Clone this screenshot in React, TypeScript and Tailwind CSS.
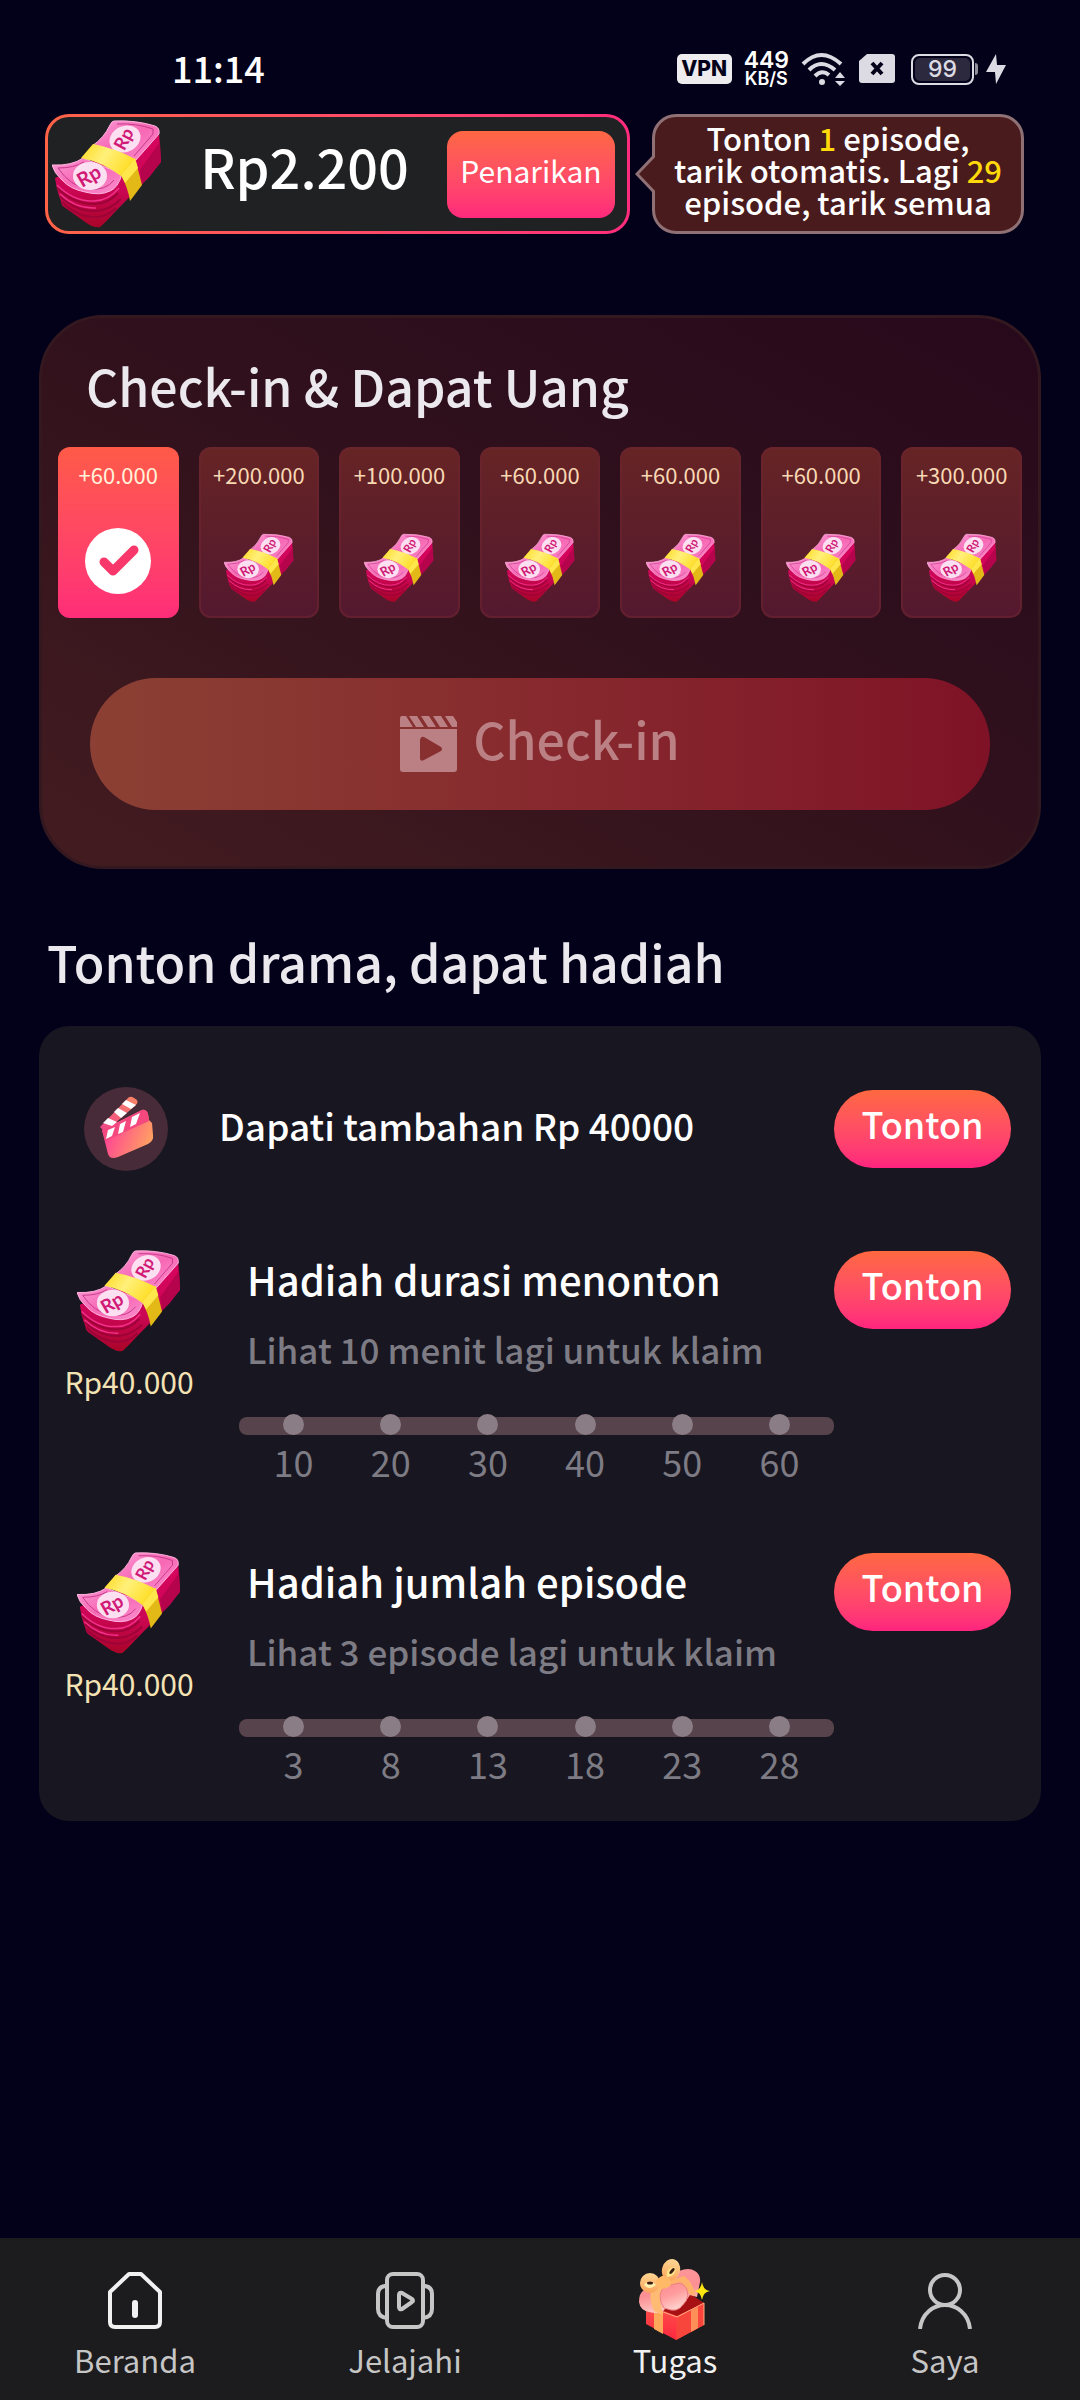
import { useState } from 'react'
import type { ReactNode } from 'react'
import clsx from 'clsx'

const days = [
    { amount: '+60.000', done: true },
    { amount: '+200.000', done: false },
    { amount: '+100.000', done: false },
    { amount: '+60.000', done: false },
    { amount: '+60.000', done: false },
    { amount: '+60.000', done: false },
    { amount: '+300.000', done: false },
]

const rewards = [
    {
        title: 'Hadiah durasi menonton',
        hint: 'Lihat 10 menit lagi untuk klaim',
        amount: 'Rp40.000',
        steps: [10, 20, 30, 40, 50, 60],
    },
    {
        title: 'Hadiah jumlah episode',
        hint: 'Lihat 3 episode lagi untuk klaim',
        amount: 'Rp40.000',
        steps: [3, 8, 13, 18, 23, 28],
    },
]

function MoneyStack({ className }: { className: string }) {
    return (
        <svg viewBox="0 0 110 108" className={className} aria-hidden="true">
            <defs>
                <linearGradient id="money-side" x1="0" y1="0" x2="0" y2="1">
                    <stop offset="0" stopColor="#d8045f" />
                    <stop offset="0.6" stopColor="#cb0655" />
                    <stop offset="1" stopColor="#a90428" />
                </linearGradient>
                <linearGradient id="money-note" x1="0" y1="0" x2="1" y2="1">
                    <stop offset="0" stopColor="#fb9bd6" />
                    <stop offset="0.5" stopColor="#f768b4" />
                    <stop offset="1" stopColor="#fa8fce" />
                </linearGradient>
                <linearGradient id="money-band" x1="0" y1="0" x2="1" y2="0.4">
                    <stop offset="0" stopColor="#ffd91f" />
                    <stop offset="0.5" stopColor="#fff07a" />
                    <stop offset="1" stopColor="#ffdf2b" />
                </linearGradient>
            </defs>
            <path d="M3 58 L107 12 L109 42 Q104 48 98 56 L62 93 Q52 104 48 107 Q43 108 36 104 L12 87 Q9 85 9 81 L7 76 Q4 66 3 58Z" fill="url(#money-side)" />
            <path d="M88 50 L108 22 L109 42 Q104 48 98 56 L90 64Z" fill="#b5034c" />
            <path d="M5 68 Q22 84 42 84 Q56 84 66 73 M8 76 Q24 92 44 91 Q58 90 69 79 M10 82 Q26 98 46 97 Q56 96 64 88" fill="none" stroke="#9c0438" strokeWidth="2" />
            <path d="M5 65 Q22 82 42 81 Q56 81 67 68 M8 74 Q24 89 44 88" fill="none" stroke="#f0308a" strokeWidth="1.5" />
            <path d="M62 1 Q84 0 103 6 Q108 8 107 14 L84 40 L40 26 Q52 18 58 5 Q60 1 62 1Z" fill="url(#money-note)" stroke="#ffb5e0" strokeWidth="1" />
            <path d="M65 4 Q84 3 101 9 L101 14 L82 36" fill="none" stroke="#c63888" strokeWidth="1" />
            <path d="M0 45 Q20 46 31 38 L70 54 Q66 68 58 71 Q48 76 33 72 Q18 69 10 60 Q2 53 0 45Z" fill="url(#money-note)" stroke="#ffb5e0" strokeWidth="1" />
            <path d="M6 48 Q22 48 32 42 M6 48 Q18 66 36 69 Q54 71 62 60" fill="none" stroke="#c63888" strokeWidth="1" />
            <ellipse cx="38" cy="56" rx="17" ry="14" fill="#fce0f2" />
            <ellipse cx="73" cy="19" rx="16" ry="13" fill="#fce0f2" transform="rotate(-25 73 19)" />
            <path d="M41 24 Q63 28 83 39 L69 56 Q50 42 29 38Z" fill="url(#money-band)" />
            <path d="M83 38 L90 65 L78 81 Q76 68 69 55Z" fill="#e3b917" />
            <path d="M69 55 L83 38 L86 48 L73 63Z" fill="#ffe64a" />
            <text x="0" y="7" fontSize="20" fontWeight="700" textAnchor="middle" fill="#d01a76" fontFamily="Lato, sans-serif" transform="translate(37 56) rotate(-30)">Rp</text>
            <text x="0" y="6" fontSize="18" fontWeight="700" textAnchor="middle" fill="#d01a76" fontFamily="Lato, sans-serif" transform="translate(72 19) rotate(-62)">Rp</text>
        </svg>
    )
}

function CheckBadge() {
    return (
        <svg viewBox="0 0 66 66" className="size-[66px]" aria-hidden="true">
            <circle cx="33" cy="33" r="33" fill="#fff" />
            <path d="M19 34 L28 43 L49 22" fill="none" stroke="#f8386b" strokeWidth="9" strokeLinecap="round" strokeLinejoin="round" />
        </svg>
    )
}

function ClapperIcon() {
    return (
        <svg viewBox="0 0 57 56" className="h-14 w-[57px]" fill="currentColor" aria-hidden="true">
            <path d="M1 0 L6 0 L13 11 L0 11 L0 2Z M9 0 L17 0 L24 11 L16 11Z M21 0 L29 0 L36 11 L28 11Z M33 0 L41 0 L48 11 L40 11Z M45 0 L53 0 L57 6 L57 11 L52 11Z" />
            <path fillRule="evenodd" d="M0 13 L57 13 L57 53 Q57 56 54 56 L3 56 Q0 56 0 53Z M20 24 L20 43 Q21 46 24 44 L41 35 Q43 33 41 31 L24 21 Q21 20 20 24Z" />
        </svg>
    )
}

function ClapperBadge() {
    return (
        <svg viewBox="0 0 84 84" className="size-[84px]" aria-hidden="true">
            <defs>
                <linearGradient id="clap" x1="0" y1="0.3" x2="1" y2="0.7">
                    <stop offset="0.1" stopColor="#ff3f97" />
                    <stop offset="1" stopColor="#ffa65f" />
                </linearGradient>
                <linearGradient id="clap-stick" x1="0" y1="1" x2="1" y2="0">
                    <stop offset="0" stopColor="#f0458a" />
                    <stop offset="1" stopColor="#f98765" />
                </linearGradient>
            </defs>
            <circle cx="42" cy="42" r="42" fill="#472b38" />
            <path d="M18 43 L58 23 Q62 22 64 27 L65 33 L68 36 L69 48 Q70 54 64 57 L34 70 Q26 73 24 67Z" fill="url(#clap)" />
            <path d="M18 43 L58 23 Q62 22 64 27 L65 34 L21 54Z" fill="#f4487f" />
            <path d="M16 40 L43 12 Q46 8 50 11 Q56 14 52 18 L29 38 L19 43Z" fill="url(#clap-stick)" />
            <path d="M38 17 L42 13 L52 18 L47 22Z M30 25 L34 21 L43 26 L37 31Z M19 36 L24 31 L33 35 L28 39Z" fill="#fff" />
            <path d="M24 43 L31 40 L28 49 L22 52Z M36 37 L42 34 L39 45 L34 47Z M48 30 L56 26 L52 37 L46 40Z" fill="#fff" />
        </svg>
    )
}

function HomeIcon() {
    return (
        <svg viewBox="0 0 56 58" className="h-[58px] w-14" fill="none" stroke="#f1f1f1" strokeWidth="4" strokeLinejoin="round" strokeLinecap="round" aria-hidden="true">
            <path d="M22 3 L34 3 L53 21 L53 51 Q53 56 48 56 L8 56 Q3 56 3 51 L3 21Z" />
            <path d="M28 32 L28 44" strokeWidth="6" />
        </svg>
    )
}

function ExploreIcon() {
    return (
        <svg viewBox="0 0 60 58" className="h-[58px] w-[60px]" fill="none" stroke="#c6c6c6" strokeWidth="4" strokeLinejoin="round" aria-hidden="true">
            <rect x="12" y="3" width="36" height="53" rx="6" />
            <path d="M12 15 L10 15 Q3 16 3 23 L3 38 Q3 46 12 47 M48 15 L50 15 Q57 16 57 23 L57 38 Q57 46 48 47" />
            <path d="M24 24 Q24 21 27 22 L37 28 Q39 30 37 31 L27 38 Q24 39 24 36Z" />
        </svg>
    )
}

function GiftIcon() {
    return (
        <svg viewBox="0 0 72 82" className="h-[82px] w-[72px]" aria-hidden="true">
            <defs>
                <linearGradient id="gift-lid" x1="0" y1="0" x2="0.3" y2="1">
                    <stop offset="0" stopColor="#ff9a9c" />
                    <stop offset="0.6" stopColor="#fb8f94" />
                    <stop offset="1" stopColor="#ffc9c4" />
                </linearGradient>
                <linearGradient id="gift-front" x1="0" y1="0" x2="0.4" y2="1">
                    <stop offset="0" stopColor="#fb8a90" />
                    <stop offset="0.5" stopColor="#ff9c9d" />
                    <stop offset="1" stopColor="#ffd0cb" />
                </linearGradient>
                <linearGradient id="gift-bow" x1="0" y1="0" x2="0" y2="1">
                    <stop offset="0" stopColor="#ffd793" />
                    <stop offset="1" stopColor="#fba35a" />
                </linearGradient>
                <linearGradient id="gift-box" x1="0" y1="0" x2="0" y2="1">
                    <stop offset="0" stopColor="#fb5a4c" />
                    <stop offset="1" stopColor="#ff2840" />
                </linearGradient>
            </defs>
            <path d="M7 50 L40 38 L65 44 L65 66 L37 81 L7 65Z" fill="url(#gift-box)" />
            <path d="M38 57 L65 44 L65 66 L37 81Z" fill="#f9463c" />
            <path d="M22 51 L50 34 L65 44 L38 57Z" fill="#a81113" />
            <path d="M24 53 L38 58 L65 44 L65 66" fill="none" stroke="#ffab80" strokeWidth="1" />
            <path d="M52 51 L59 48 L59 69 L52 73Z" fill="#ff8f58" />
            <path d="M15 48 L24 52 L24 75 L15 70Z" fill="#ffa85c" />
            <path d="M0 43 Q0 34 5 31 L40 12 Q50 8 56 12 Q62 16 61 23 L58 38 Q54 37 51 36 L44 46 L26 50 Q22 56 10 53 Q1 51 0 43Z" fill="url(#gift-lid)" />
            <path d="M30 22 L45 17 Q55 24 56 37 L50 35 Q49 27 39 25 L28 28Z" fill="#ffb26c" />
            <path d="M13 29 L30 24 Q22 32 21 41 L24 56 L15 52 Q9 38 13 29Z" fill="#ffbb74" />
            <path d="M21 37 Q22 29 28 27 L40 24 Q45 24 48 31 Q50 37 47 42 L41 49 Q37 52 32 51 L25 49 Q21 44 21 37Z" fill="url(#gift-front)" stroke="#ee7f80" strokeWidth="1" />
            <ellipse cx="11" cy="24" rx="10" ry="10" fill="url(#gift-bow)" />
            <path d="M5 26 Q10 19 17 26 Q10 32 5 26Z" fill="#fff0ad" />
            <ellipse cx="11" cy="24" rx="3" ry="1.5" fill="#3b1c13" />
            <ellipse cx="32" cy="11" rx="9" ry="11" fill="url(#gift-bow)" transform="rotate(15 32 11)" />
            <path d="M28 18 Q26 9 36 8 Q38 17 28 18Z" fill="#ffe58c" />
            <ellipse cx="33" cy="12" rx="3.5" ry="1.5" fill="#3b1c13" transform="rotate(-50 33 12)" />
            <path d="M17 22 Q23 14 29 18 Q34 23 31 27 Q25 32 19 28Z" fill="#ffb967" />
            <path d="M63 23 Q64 31 71 32 Q64 33 63 41 Q62 33 55 32 Q62 31 63 23Z" fill="#ffe712" />
        </svg>
    )
}

function ProfileIcon() {
    return (
        <svg viewBox="0 0 56 58" className="h-[58px] w-14" fill="none" stroke="#c6c6c6" strokeWidth="4" aria-hidden="true">
            <circle cx="28" cy="19" r="15" />
            <path d="M3 58 Q4 47 12 40 Q19 34 28 34 Q37 34 44 40 Q52 47 53 58" />
        </svg>
    )
}

function StatusBar() {
    return (
        <div className="flex h-[114px] items-center justify-between pt-5 pr-[74px] pl-[172px]">
            <span className="text-4xl font-medium">11:14</span>
            <div className="flex items-center gap-3 pt-1 font-['Inter',sans-serif]">
                <span className="flex h-[30px] w-[55px] items-center justify-center rounded-[5px] bg-[#eeecef] text-[21px] font-extrabold text-[#03001a]">
                    VPN
                </span>
                <span className="flex flex-col items-center font-semibold">
                    <span className="text-[23px] leading-5">449</span>
                    <span className="text-lg leading-[18px]">KB/S</span>
                </span>
                <svg viewBox="0 0 46 34" className="h-[34px] w-[46px]" fill="none" stroke="#dcdae2" strokeWidth="4" aria-hidden="true">
                    <path d="M2 12 Q20 -6 40 12 M8 18 Q20 6 34 18 M14 24 Q21 17 28 23" />
                    <circle cx="21" cy="30" r="3" fill="#dcdae2" stroke="none" />
                    <path d="M34 26 L39 20 L44 26Z M34 29 L44 29 L39 34Z" fill="#dcdae2" stroke="none" />
                </svg>
                <svg viewBox="0 0 36 30" className="h-[30px] w-9" aria-hidden="true">
                    <path d="M8 0 L33 0 Q36 0 36 3 L36 26 Q36 29 33 29 L3 29 Q0 29 0 26 L0 7Z" fill="#dcdae2" />
                    <path d="M13 9 L23 20 M23 9 L13 20" stroke="#03001a" strokeWidth="4" />
                </svg>
                <div className="flex items-center pl-1">
                    <span className="flex h-[31px] w-[63px] items-center justify-center rounded-lg border-2 border-[#dcdae2] p-0.5">
                        <span className="flex size-full items-center justify-center rounded-[5px] bg-[#2c293f] text-[23px] font-medium text-[#dcdae2]">
                            99
                        </span>
                    </span>
                    <span className="ml-px h-3 w-[3px] rounded-r bg-[#8f8d99]" />
                    <svg viewBox="0 0 20 30" className="ml-2 h-[30px] w-5" fill="#dcdae2" aria-hidden="true">
                        <path d="M10 0 L0 18 L9 18 L10 30 L20 11 L11 11Z" />
                    </svg>
                </div>
            </div>
        </div>
    )
}

function BalanceRow() {
    return (
        <div className="flex gap-[22px] pr-[17px] pl-1.5">
            <div className="h-[120px] flex-1 rounded-3xl bg-linear-to-r from-[#ff6347] to-[#ff2c7c] p-[3px]">
                <div className="flex h-full items-center rounded-[21px] bg-[#202122] pr-3 pl-1">
                    <MoneyStack className="h-[108px] w-[110px] shrink-0" />
                    <span className="flex-1 pb-4 text-center text-[54px] leading-none font-medium">Rp2.200</span>
                    <button className="h-[87px] w-[168px] rounded-2xl bg-linear-to-b from-[#ff6743] to-[#ff287c] pb-2 text-3xl">
                        Penarikan
                    </button>
                </div>
            </div>
            <div className="relative flex h-[120px] w-[372px] shrink-0 items-center justify-center rounded-3xl border-[3px] border-[#8e7075] bg-[#4a1b1c] pb-2">
                <svg viewBox="0 0 20 38" className="absolute top-[38px] -left-5 h-[38px] w-5" aria-hidden="true">
                    <path d="M20 0 L2 19 L20 38" fill="#4a1b1c" stroke="#8e7075" strokeWidth="3" />
                </svg>
                <p className="text-center text-[31px] leading-8 font-medium">
                    Tonton <span className="text-[#ffd90a]">1</span> episode,
                    <br />
                    tarik otomatis. Lagi <span className="text-[#ffd90a]">29</span>
                    <br />
                    episode, tarik semua
                </p>
            </div>
        </div>
    )
}

function CheckInCard() {
    return (
        <section className="mt-[81px] rounded-[64px] border-[3px] border-[#331820] bg-linear-to-tr from-[#431c20] via-[#31111c] to-[#27091c] px-4 pt-[35px] pb-14">
            <h2 className="pl-7 text-[50px] leading-[64px] font-medium text-[#ece9ee]">Check-in &amp; Dapat Uang</h2>
            <ul className="mt-[30px] grid grid-cols-7 gap-5">
                {days.map((day, i) => (
                    <li
                        key={i}
                        className={clsx(
                            'flex h-[171px] flex-col items-center justify-between rounded-xl pt-[11px] text-[22px] leading-8',
                            day.done
                                ? 'bg-linear-to-b from-[#ff5a48] to-[#ff2d78] pb-6 text-[#fff3dc]'
                                : 'bg-linear-to-b from-[#662424] to-[#54182f] pb-[15px] text-[#f8d9b4] inset-ring-2 inset-ring-[#6c2430]/60'
                        )}
                    >
                        <span>{day.amount}</span>
                        {day.done ? <CheckBadge /> : <MoneyStack className="size-[70px]" />}
                    </li>
                ))}
            </ul>
            <div className="mt-[60px] px-8">
                <button
                    disabled
                    className="flex h-[132px] w-full items-center justify-center gap-4 rounded-full bg-linear-to-r from-[#8b4033] via-[#87292e] to-[#7f1226] text-[50px] font-medium text-[#ba8083]"
                >
                    <ClapperIcon />
                    <span className="pb-3">Check-in</span>
                </button>
            </div>
        </section>
    )
}

function WatchButton() {
    return (
        <button className="h-[78px] w-[177px] shrink-0 rounded-full bg-linear-to-b from-[#ff6840] to-[#ff237e] pb-3 text-4xl font-medium">
            Tonton
        </button>
    )
}

function StepTrack({ steps }: { steps: number[] }) {
    return (
        <div className="mt-11">
            <div className="grid h-[18px] grid-cols-6 content-end justify-items-center rounded-lg bg-[#56434b] px-1.5">
                {steps.map((step) => (
                    <span key={step} className="size-[21px] rounded-full bg-[#8b7d86]" />
                ))}
            </div>
            <div className="grid grid-cols-6 px-1.5 text-center text-4xl leading-[52px] text-[#7d7b84]">
                {steps.map((step) => (
                    <span key={step}>{step}</span>
                ))}
            </div>
        </div>
    )
}

function TaskCard() {
    return (
        <section className="mt-[33px] rounded-[30px] bg-[#181620] pt-[61px] pr-[30px] pb-8 pl-4">
            <div className="flex items-center">
                <div className="flex w-[148px] shrink-0 justify-center pr-1.5">
                    <ClapperBadge />
                </div>
                <p className="flex-1 pb-2 pl-4 text-[37px] leading-[48px] font-medium">Dapati tambahan Rp 40000</p>
                <WatchButton />
            </div>
            <div className="mt-[78px] flex flex-col gap-16">
                {rewards.map((reward) => (
                    <div key={reward.title} className="flex items-start">
                        <div className="flex w-[148px] shrink-0 flex-col items-center gap-2">
                            <MoneyStack className="size-[104px]" />
                            <span className="text-3xl leading-10 text-[#f3e2b3]">{reward.amount}</span>
                        </div>
                        <div className="flex flex-1 pt-0.5">
                            <div className="flex-1 pl-9">
                                <h3 className="pl-2 text-[40px] leading-[56px] font-medium">{reward.title}</h3>
                                <p className="mt-[18px] pl-2 text-[35px] leading-[48px] font-medium text-[#7d7b84]">{reward.hint}</p>
                                <StepTrack steps={reward.steps} />
                            </div>
                            <WatchButton />
                        </div>
                    </div>
                ))}
            </div>
        </section>
    )
}

const tabs: { label: string; icon: ReactNode }[] = [
    { label: 'Beranda', icon: <HomeIcon /> },
    { label: 'Jelajahi', icon: <ExploreIcon /> },
    { label: 'Tugas', icon: <GiftIcon /> },
    { label: 'Saya', icon: <ProfileIcon /> },
]

function BottomNav() {
    const [active, setActive] = useState('Tugas')

    return (
        <nav className="mt-auto grid grid-cols-4 bg-[#1c1b1d] pt-[22px] pb-5">
            {tabs.map((tab) => (
                <button
                    key={tab.label}
                    onClick={() => setActive(tab.label)}
                    className={clsx(
                        'flex flex-col items-center text-[31px] leading-10',
                        active === tab.label ? 'text-[#f1f1f1]' : 'text-[#c6c6c6]'
                    )}
                >
                    <span className="flex h-20 items-center">{tab.icon}</span>
                    <span>{tab.label}</span>
                </button>
            ))}
        </nav>
    )
}

export default function App() {
    return (
        <div className="flex min-h-screen flex-col bg-[#030019] font-['Noto_Sans_CJK_SC',sans-serif] text-white">
            <StatusBar />
            <main className="px-[39px]">
                <BalanceRow />
                <CheckInCard />
                <h2 className="mt-[60px] pl-2 text-[50px] leading-[64px] font-medium text-[#ece9ee]">
                    Tonton drama, dapat hadiah
                </h2>
                <TaskCard />
            </main>
            <BottomNav />
        </div>
    )
}
